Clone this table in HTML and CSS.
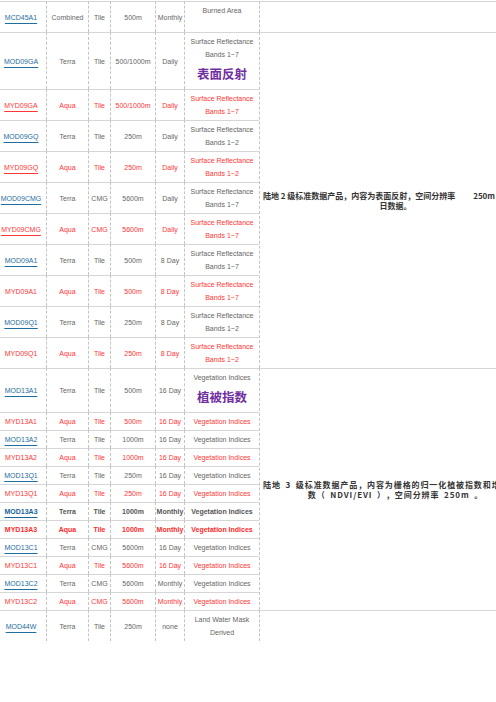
FILE: index.html
```html
<!DOCTYPE html>
<html lang="zh-CN">
<head>
<meta charset="utf-8">
<title>MODIS 产品</title>
<link rel="stylesheet" href="styles.css">
</head>
<body>
<table class="modis">
  <colgroup>
    <col class="c-name"><col class="c-sat"><col class="c-grid"><col class="c-res"><col class="c-time"><col class="c-desc"><col class="c-note">
  </colgroup>
  <tbody>
    <tr>
      <td><a class="lnk">MCD45A1</a></td><td>Combined</td><td>Tile</td><td>500m</td><td>Monthly</td>
      <td>Burned Area<br>&nbsp;</td><td class="note"></td>
    </tr>
    <tr>
      <td><a class="lnk">MOD09GA</a></td><td>Terra</td><td>Tile</td><td>500/1000m</td><td>Daily</td>
      <td>Surface Reflectance<br>Bands 1~7<div class="big">表面反射</div></td>
      <td class="note" rowspan="10">陆地 2 级标准数据产品，内容为表面反射，空间分辨率&emsp;&emsp; 250m 、500m，每<br>日数据。</td>
    </tr>
    <tr class="aqua">
      <td><a class="lnk">MYD09GA</a></td><td>Aqua</td><td>Tile</td><td>500/1000m</td><td>Daily</td>
      <td>Surface Reflectance<br>Bands 1~7</td>
    </tr>
    <tr>
      <td><a class="lnk">MOD09GQ</a></td><td>Terra</td><td>Tile</td><td>250m</td><td>Daily</td>
      <td>Surface Reflectance<br>Bands 1~2</td>
    </tr>
    <tr class="aqua">
      <td><a class="lnk">MYD09GQ</a></td><td>Aqua</td><td>Tile</td><td>250m</td><td>Daily</td>
      <td>Surface Reflectance<br>Bands 1~2</td>
    </tr>
    <tr>
      <td><a class="lnk">MOD09CMG</a></td><td>Terra</td><td>CMG</td><td>5600m</td><td>Daily</td>
      <td>Surface Reflectance<br>Bands 1~7</td>
    </tr>
    <tr class="aqua">
      <td><a class="lnk">MYD09CMG</a></td><td>Aqua</td><td>CMG</td><td>5600m</td><td>Daily</td>
      <td>Surface Reflectance<br>Bands 1~7</td>
    </tr>
    <tr>
      <td><a class="lnk">MOD09A1</a></td><td>Terra</td><td>Tile</td><td>500m</td><td>8 Day</td>
      <td>Surface Reflectance<br>Bands 1~7</td>
    </tr>
    <tr class="aqua">
      <td>MYD09A1</td><td>Aqua</td><td>Tile</td><td>500m</td><td>8 Day</td>
      <td>Surface Reflectance<br>Bands 1~7</td>
    </tr>
    <tr>
      <td><a class="lnk">MOD09Q1</a></td><td>Terra</td><td>Tile</td><td>250m</td><td>8 Day</td>
      <td>Surface Reflectance<br>Bands 1~2</td>
    </tr>
    <tr class="aqua">
      <td>MYD09Q1</td><td>Aqua</td><td>Tile</td><td>250m</td><td>8 Day</td>
      <td>Surface Reflectance<br>Bands 1~2</td>
    </tr>
    <tr>
      <td><a class="lnk">MOD13A1</a></td><td>Terra</td><td>Tile</td><td>500m</td><td>16 Day</td>
      <td>Vegetation Indices<div class="big">植被指数</div></td>
      <td class="note" rowspan="12"><span class="spread">陆地 3 级标准数据产品，内容为栅格的归一化植被指数和增强型植被指</span><br><span class="spread">数（ NDVI/EVI ），空间分辨率 250m 。</span></td>
    </tr>
    <tr class="aqua">
      <td>MYD13A1</td><td>Aqua</td><td>Tile</td><td>500m</td><td>16 Day</td><td>Vegetation Indices</td>
    </tr>
    <tr>
      <td><a class="lnk">MOD13A2</a></td><td>Terra</td><td>Tile</td><td>1000m</td><td>16 Day</td><td>Vegetation Indices</td>
    </tr>
    <tr class="aqua">
      <td>MYD13A2</td><td>Aqua</td><td>Tile</td><td>1000m</td><td>16 Day</td><td>Vegetation Indices</td>
    </tr>
    <tr>
      <td><a class="lnk">MOD13Q1</a></td><td>Terra</td><td>Tile</td><td>250m</td><td>16 Day</td><td>Vegetation Indices</td>
    </tr>
    <tr class="aqua">
      <td>MYD13Q1</td><td>Aqua</td><td>Tile</td><td>250m</td><td>16 Day</td><td>Vegetation Indices</td>
    </tr>
    <tr class="strong">
      <td><a class="lnk">MOD13A3</a></td><td>Terra</td><td>Tile</td><td>1000m</td><td>Monthly</td><td>Vegetation Indices</td>
    </tr>
    <tr class="aqua strong">
      <td>MYD13A3</td><td>Aqua</td><td>Tile</td><td>1000m</td><td>Monthly</td><td>Vegetation Indices</td>
    </tr>
    <tr>
      <td><a class="lnk">MOD13C1</a></td><td>Terra</td><td>CMG</td><td>5600m</td><td>16 Day</td><td>Vegetation Indices</td>
    </tr>
    <tr class="aqua">
      <td>MYD13C1</td><td>Aqua</td><td>Tile</td><td>5600m</td><td>16 Day</td><td>Vegetation Indices</td>
    </tr>
    <tr>
      <td><a class="lnk">MOD13C2</a></td><td>Terra</td><td>CMG</td><td>5600m</td><td>Monthly</td><td>Vegetation Indices</td>
    </tr>
    <tr class="aqua">
      <td>MYD13C2</td><td>Aqua</td><td>CMG</td><td>5600m</td><td>Monthly</td><td>Vegetation Indices</td>
    </tr>
    <tr class="last">
      <td><a class="lnk">MOD44W</a></td><td>Terra</td><td>Tile</td><td>250m</td><td>none</td>
      <td>Land Water Mask<br>Derived</td><td class="note"></td>
    </tr>
  </tbody>
</table>
</body>
</html>
```
FILE: styles.css
```css
html {
  overflow: hidden;
  background: #fff;
}

body {
  margin: 0;
  font-family: "Liberation Sans", Arial, sans-serif;
}

.modis {
  border-collapse: separate;
  border-spacing: 0;
  table-layout: fixed;
  width: 536px;
  margin: 1px 0 0 -5px;
  font-size: 7px;
  line-height: 13px;
  color: #666;
}

.c-name { width: 51px; }
.c-sat { width: 42px; }
.c-grid { width: 22px; }
.c-res { width: 45px; }
.c-time { width: 29px; }
.c-desc { width: 75px; }
.c-note { width: 272px; }

.modis td {
  border-top: 1px solid #d6d6d6;
  border-left: 1px dashed #c4c4c4;
  padding: 2px 0;
  text-align: center;
  vertical-align: middle;
  white-space: nowrap;
}

.lnk {
  color: #1f6ea0;
  text-decoration: underline;
  text-underline-offset: 3px;
  text-decoration-thickness: 1px;
}

.aqua td,
.aqua .lnk {
  color: #ff3636;
}

.strong td {
  font-weight: bold;
  color: #555;
}

.strong .lnk {
  color: #17639a;
}

.aqua.strong td {
  color: #ff2a2a;
}

.big {
  font-family: "Noto Sans CJK SC", sans-serif;
  font-size: 12.5px;
  line-height: 26px;
  font-weight: bold;
  color: #7030a0;
}

.modis td.note {
  font-family: "Noto Sans CJK SC", "Liberation Sans", sans-serif;
  font-size: 8px;
  line-height: 10px;
  font-weight: bold;
  color: #333;
  padding: 0 3px;
  text-align: center;
  overflow: visible;
}

.spread {
  letter-spacing: 0.9px;
  word-spacing: 2px;
}
```
